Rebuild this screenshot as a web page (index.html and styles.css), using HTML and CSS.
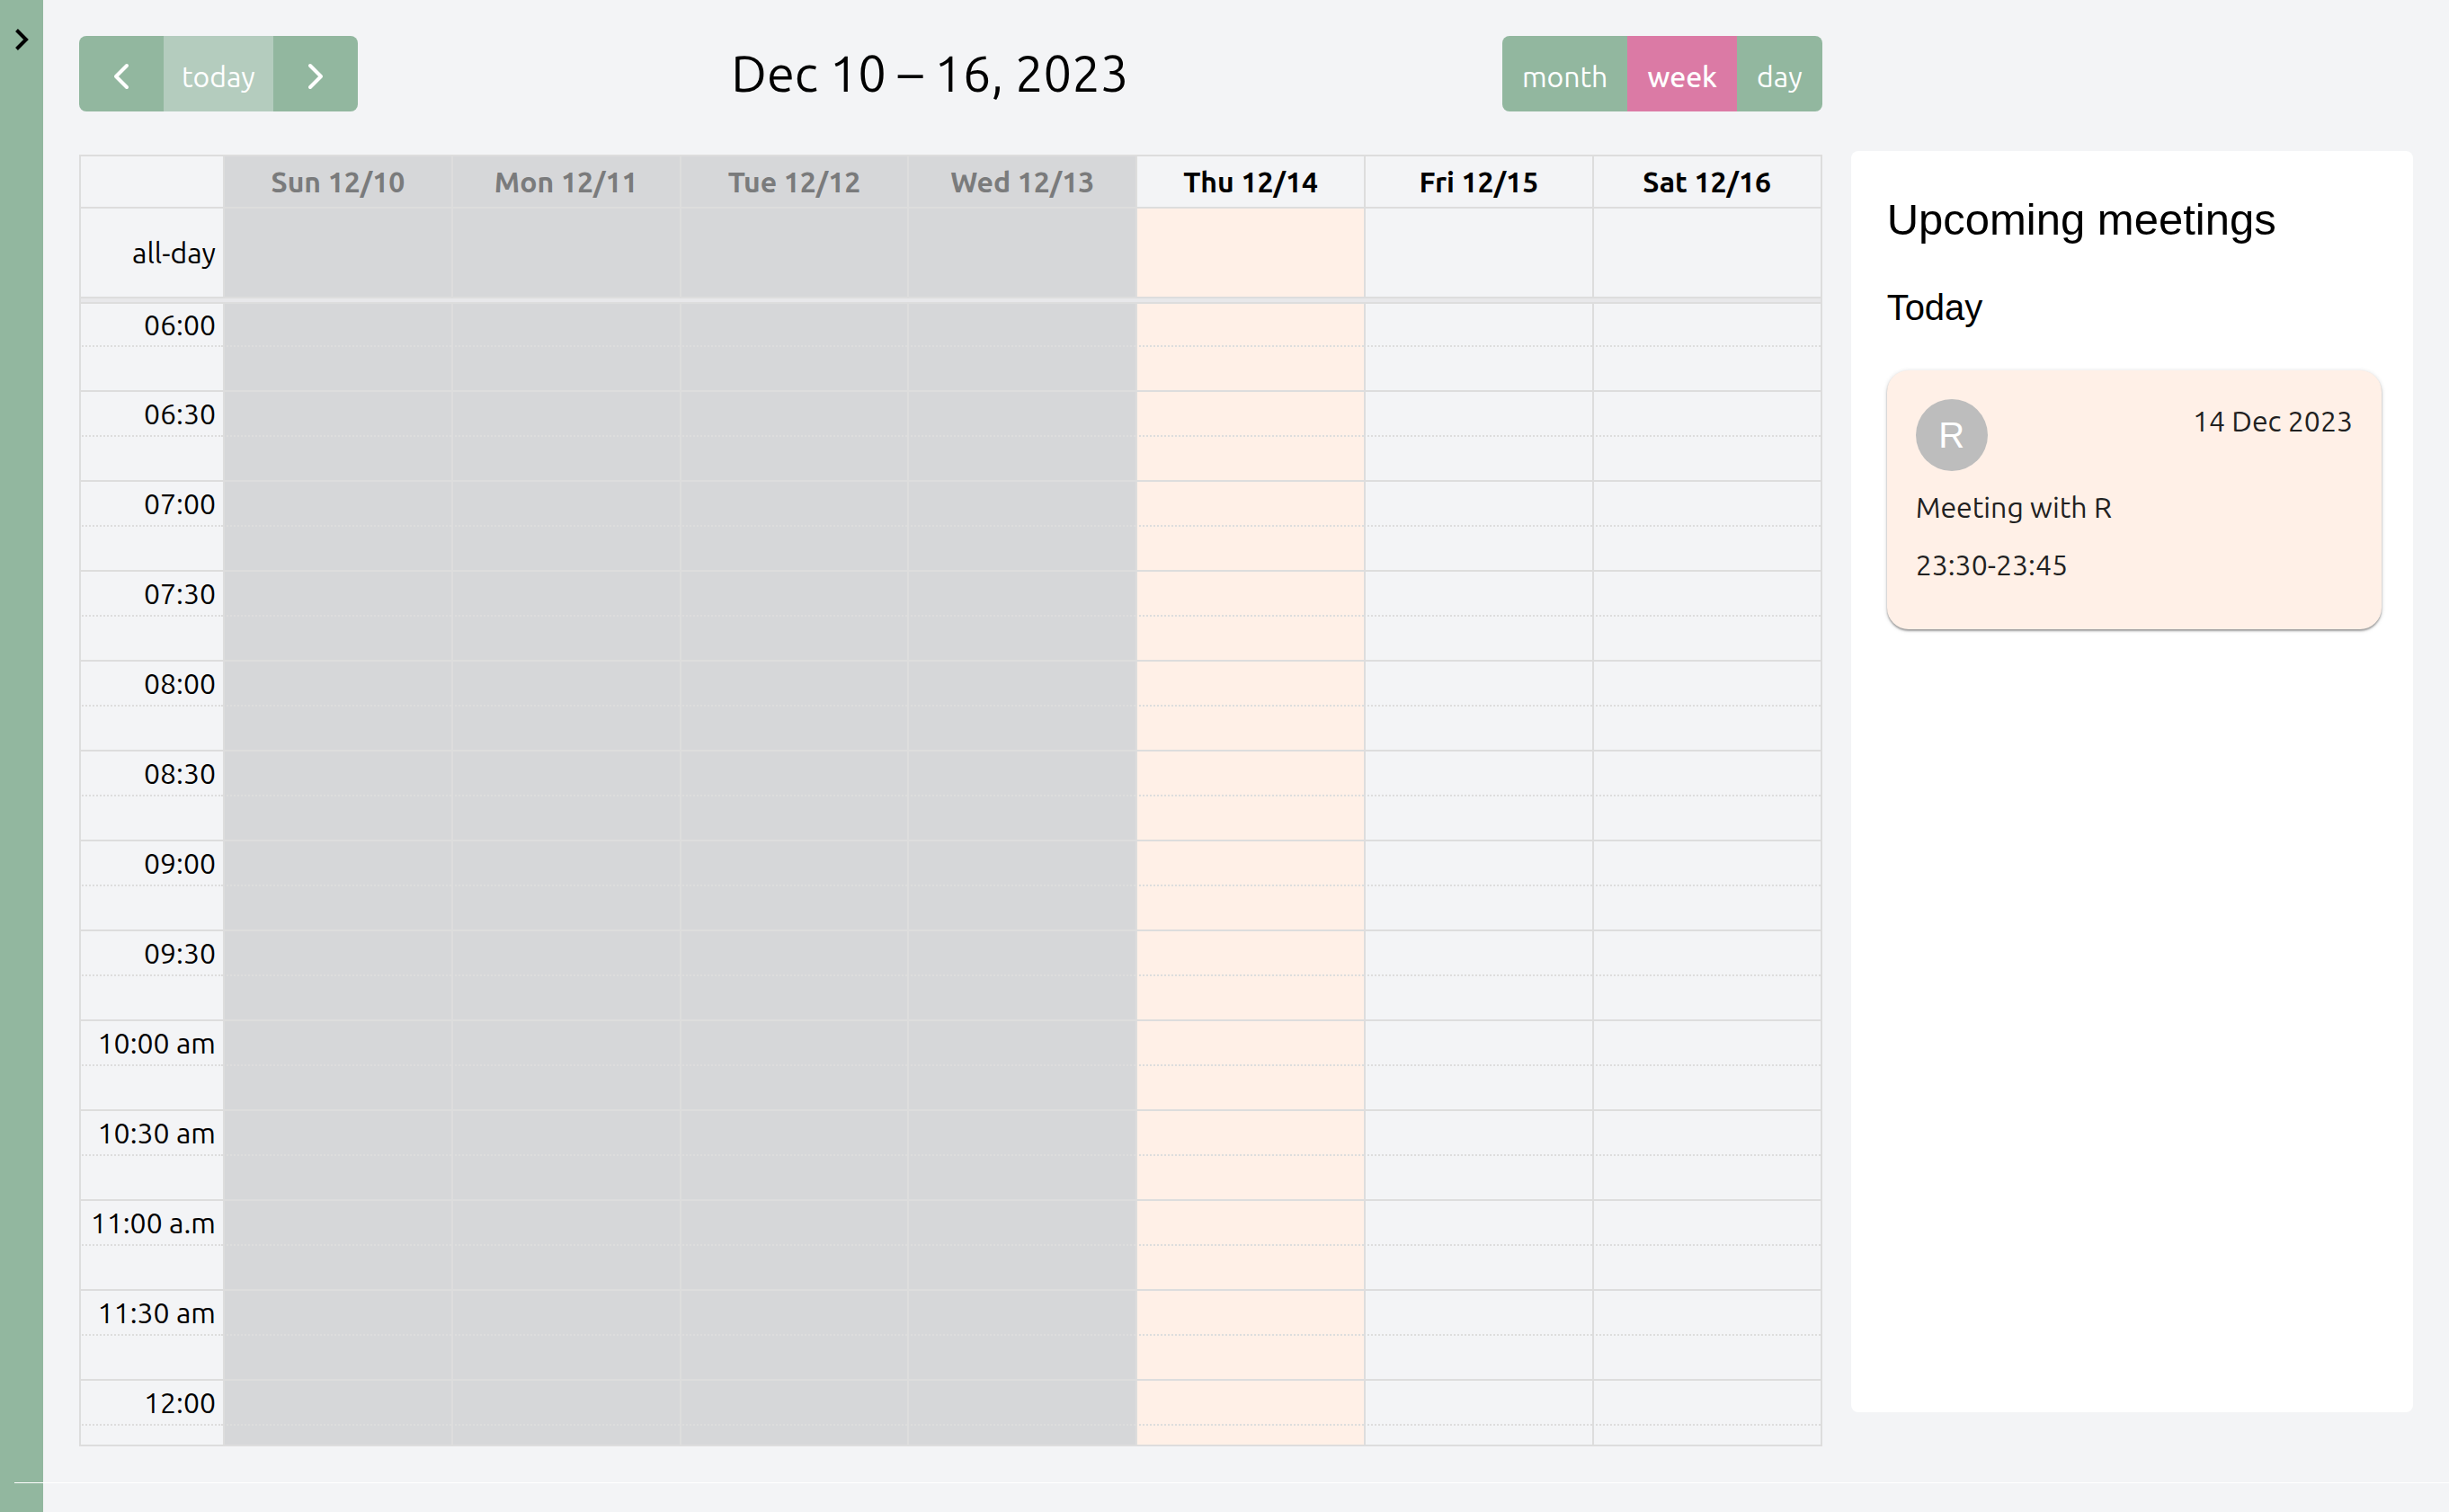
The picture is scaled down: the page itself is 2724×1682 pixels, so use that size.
FILE: index.html
```html
<!DOCTYPE html>
<html lang="en">
<head>
<meta charset="utf-8">
<title>Calendar</title>
<link rel="stylesheet" href="styles.css">
</head>
<body>
<div class="app">
  <aside class="rail">
    <button class="rail-toggle" type="button" aria-label="Open menu">
      <svg width="16" height="24" viewBox="0 0 16 24" fill="none" stroke="#000" stroke-width="4"><path d="M2.500 1.500 13 12 2.500 22.500"/></svg>
    </button>
  </aside>
  <main class="main">
    <section class="calendar">
      <header class="toolbar">
        <div class="button-group">
          <button class="btn btn-icon" type="button" aria-label="Previous week">
            <svg width="18" height="30" viewBox="0 0 18 30" fill="none" stroke="#fff" stroke-width="4" stroke-linecap="round" stroke-linejoin="round"><path d="M15 3 3 15 15 27"/></svg>
          </button>
          <button class="btn btn-today" type="button" disabled>today</button>
          <button class="btn btn-icon" type="button" aria-label="Next week">
            <svg width="18" height="30" viewBox="0 0 18 30" fill="none" stroke="#fff" stroke-width="4" stroke-linecap="round" stroke-linejoin="round"><path d="M3 3 15 15 3 27"/></svg>
          </button>
        </div>
        <h1 class="title">Dec 10 – 16, 2023</h1>
        <div class="button-group">
          <button class="btn" type="button">month</button>
          <button class="btn btn-active" type="button" aria-pressed="true">week</button>
          <button class="btn" type="button">day</button>
        </div>
      </header>
      <div class="grid-frame">
        <table class="week">
          <colgroup><col class="axis-col"><col span="7"></colgroup>
          <thead>
            <tr class="days"><td></td><th scope="col">Sun 12/10</th><th scope="col">Mon 12/11</th><th scope="col">Tue 12/12</th><th scope="col">Wed 12/13</th><th scope="col">Thu 12/14</th><th scope="col">Fri 12/15</th><th scope="col">Sat 12/16</th></tr>
          </thead>
          <tbody>
            <tr class="all-day"><th scope="row">all-day</th><td></td><td></td><td></td><td></td><td></td><td></td><td></td></tr>
            <tr class="divider"><td colspan="8"></td></tr>
            <tr class="first"><th scope="row">06:00</th><td></td><td></td><td></td><td></td><td></td><td></td><td></td></tr>
            <tr class="minor"><td></td><td></td><td></td><td></td><td></td><td></td><td></td><td></td></tr>
            <tr><th scope="row">06:30</th><td></td><td></td><td></td><td></td><td></td><td></td><td></td></tr>
            <tr class="minor"><td></td><td></td><td></td><td></td><td></td><td></td><td></td><td></td></tr>
            <tr><th scope="row">07:00</th><td></td><td></td><td></td><td></td><td></td><td></td><td></td></tr>
            <tr class="minor"><td></td><td></td><td></td><td></td><td></td><td></td><td></td><td></td></tr>
            <tr><th scope="row">07:30</th><td></td><td></td><td></td><td></td><td></td><td></td><td></td></tr>
            <tr class="minor"><td></td><td></td><td></td><td></td><td></td><td></td><td></td><td></td></tr>
            <tr><th scope="row">08:00</th><td></td><td></td><td></td><td></td><td></td><td></td><td></td></tr>
            <tr class="minor"><td></td><td></td><td></td><td></td><td></td><td></td><td></td><td></td></tr>
            <tr><th scope="row">08:30</th><td></td><td></td><td></td><td></td><td></td><td></td><td></td></tr>
            <tr class="minor"><td></td><td></td><td></td><td></td><td></td><td></td><td></td><td></td></tr>
            <tr><th scope="row">09:00</th><td></td><td></td><td></td><td></td><td></td><td></td><td></td></tr>
            <tr class="minor"><td></td><td></td><td></td><td></td><td></td><td></td><td></td><td></td></tr>
            <tr><th scope="row">09:30</th><td></td><td></td><td></td><td></td><td></td><td></td><td></td></tr>
            <tr class="minor"><td></td><td></td><td></td><td></td><td></td><td></td><td></td><td></td></tr>
            <tr><th scope="row">10:00 am</th><td></td><td></td><td></td><td></td><td></td><td></td><td></td></tr>
            <tr class="minor"><td></td><td></td><td></td><td></td><td></td><td></td><td></td><td></td></tr>
            <tr><th scope="row">10:30 am</th><td></td><td></td><td></td><td></td><td></td><td></td><td></td></tr>
            <tr class="minor"><td></td><td></td><td></td><td></td><td></td><td></td><td></td><td></td></tr>
            <tr><th scope="row">11:00 a.m</th><td></td><td></td><td></td><td></td><td></td><td></td><td></td></tr>
            <tr class="minor"><td></td><td></td><td></td><td></td><td></td><td></td><td></td><td></td></tr>
            <tr><th scope="row">11:30 am</th><td></td><td></td><td></td><td></td><td></td><td></td><td></td></tr>
            <tr class="minor"><td></td><td></td><td></td><td></td><td></td><td></td><td></td><td></td></tr>
            <tr><th scope="row">12:00</th><td></td><td></td><td></td><td></td><td></td><td></td><td></td></tr>
            <tr class="minor"><td></td><td></td><td></td><td></td><td></td><td></td><td></td><td></td></tr>
          </tbody>
        </table>
      </div>
    </section>
    <aside class="panel">
      <h2 class="panel-title">Upcoming meetings</h2>
      <h3 class="panel-day">Today</h3>
      <article class="card">
        <div class="card-top">
          <span class="avatar">R</span>
          <time class="card-date" datetime="2023-12-14">14 Dec 2023</time>
        </div>
        <p class="card-line">Meeting with R</p>
        <p class="card-line">23:30-23:45</p>
      </article>
    </aside>
  </main>
  <hr class="rule">
</div>
</body>
</html>
```
FILE: styles.css
```css
* {
  box-sizing: border-box;
}

body {
  margin: 0;
  background: #f3f4f6;
  color: #000;
  font-family: Ubuntu, "Noto Sans", sans-serif;
  font-size: 32px;
  line-height: 40px;
}

.app {
  position: relative;
  display: flex;
  height: 100vh;
  overflow: hidden;
}

.rail {
  flex: none;
  width: 48px;
  padding-top: 32px;
  background: #92b79f;
}

.rail-toggle {
  display: flex;
  justify-content: center;
  width: 100%;
  padding: 0;
  border: 0;
  background: none;
}

.main {
  flex: 1;
  min-width: 0;
  display: grid;
  grid-template-columns: 31fr 10fr;
  grid-template-rows: minmax(0, 1fr);
  gap: 32px;
  padding: 40px 40px 0;
}

.calendar {
  display: flex;
  flex-direction: column;
  gap: 48px;
  min-width: 0;
  padding-bottom: 73px;
}

.toolbar {
  display: flex;
  justify-content: space-between;
  align-items: center;
}

.button-group {
  display: flex;
  height: 84px;
  border-radius: 8px;
  overflow: hidden;
}

.btn {
  padding: 6px 22px 0;
  border: 0;
  background: #92b79f;
  color: #fff;
  font: inherit;
}

.btn-icon {
  display: flex;
  align-items: center;
  justify-content: center;
  width: 94px;
}

.btn-today {
  padding: 6px 20px 0;
  background: #b4ccbe;
}

.btn-active {
  background: #db7aa5;
  font-weight: 500;
}

.title {
  margin: 0;
  font-size: 56px;
  font-weight: 400;
  line-height: 84px;
}

.grid-frame {
  flex: 1;
  min-height: 0;
  overflow: hidden;
  border-right: 2px solid #ddd;
  border-bottom: 2px solid #ddd;
}

.week {
  width: 100%;
  table-layout: fixed;
  border-collapse: separate;
  border-spacing: 0;
}

.axis-col {
  width: 160px;
}

.week th,
.week td {
  height: 50px;
  padding: 0 8px;
  border-top: 2px solid #ddd;
  border-left: 2px solid #ddd;
}

.week tbody th {
  font-weight: 400;
  text-align: right;
  white-space: nowrap;
}

.week td:nth-child(n+2):nth-child(-n+5),
.days th:nth-child(-n+5) {
  background: #d6d7d9;
}

.week td:nth-child(6) {
  background: #fff0e7;
}

.week .days > * {
  height: 58px;
}

.days th {
  font-weight: 600;
}

.days th:nth-child(-n+5) {
  color: #7a7b7c;
}

.week .all-day > * {
  height: 100px;
}

.week .divider td {
  height: 6px;
  padding: 0;
  background: #e8e8ea;
}

.week .first > * {
  height: 48px;
}

.week .minor > * {
  border-top-style: dotted;
}

.panel {
  margin: 128px 0 111px;
  padding: 40px 35px 40px 40px;
  border-radius: 8px;
  background: #fff;
  font-family: "Liberation Sans", Arial, sans-serif;
}

.panel-title {
  margin: 0 0 32px;
  font-size: 49px;
  font-weight: 400;
  line-height: 72px;
}

.panel-day {
  margin: 0 0 40px;
  font-size: 40px;
  font-weight: 400;
  line-height: 60px;
}

.card {
  padding: 32px 32px 40px;
  border-radius: 24px;
  background: #fff0e7;
  color: #212121;
  font-family: Ubuntu, "Noto Sans", sans-serif;
  box-shadow: 0 2px 2px rgba(0, 0, 0, 0.3), 0 1px 5px rgba(0, 0, 0, 0.18);
}

.card-top {
  display: flex;
  justify-content: space-between;
  margin-bottom: 8px;
}

.avatar {
  display: grid;
  place-items: center;
  width: 80px;
  height: 80px;
  border-radius: 50%;
  background: #bdbdbd;
  color: #fff;
  font-family: "Liberation Sans", Arial, sans-serif;
  font-size: 40px;
}

.card-date {
  line-height: 48px;
}

.card-line {
  margin: 0;
  line-height: 64px;
}

.rule {
  position: absolute;
  right: 0;
  bottom: 32px;
  left: 16px;
  height: 1px;
  margin: 0;
  border: 0;
  background: #fff;
}
```
